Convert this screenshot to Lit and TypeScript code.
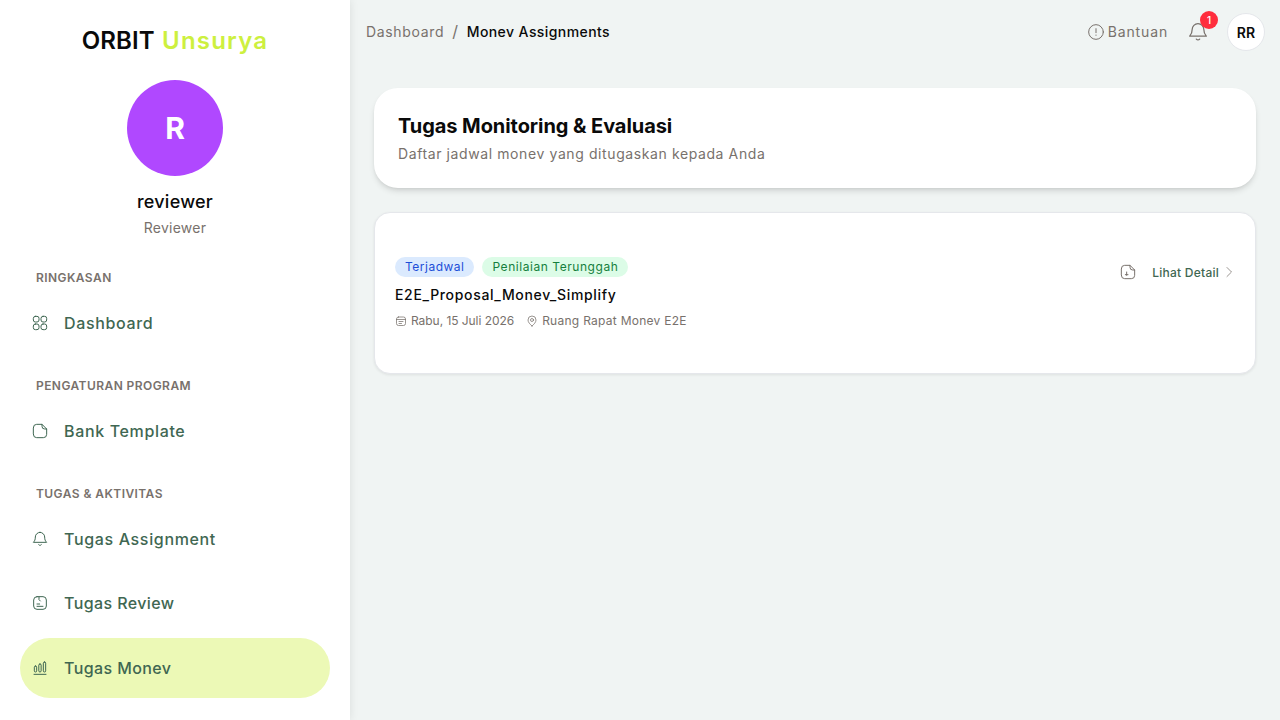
import {LitElement, css, html, svg} from 'lit';
import {customElement} from 'lit/decorators.js';

const icon = (size: number, body: unknown, sw = 1.5) => html`
  <svg width=${size} height=${size} viewBox="0 0 24 24" fill="none" stroke="currentColor"
    stroke-width=${sw} stroke-linecap="round" stroke-linejoin="round">${body}</svg>`;

const grid = svg`<rect x="2" y="2" width="8.500" height="8.500" rx="3"/><rect x="13.500" y="2" width="8.500" height="8.500" rx="3"/><rect x="2" y="13.500" width="8.500" height="8.500" rx="3"/><rect x="13.500" y="13.500" width="8.500" height="8.500" rx="3"/>`;
const note = svg`<path d="M2 7a5 5 0 0 1 5-5h8l7 7v8a5 5 0 0 1-5 5H7a5 5 0 0 1-5-5Z"/><path d="M15 2v3a4 4 0 0 0 4 4h3"/>`;
const bell = svg`<path d="M12 2a7 7 0 0 0-7 7c0 4-1 6-3 8h20c-2-2-3-4-3-8a7 7 0 0 0-7-7Z"/><path d="M10 20.500c.6.700 1.200 1 2 1s1.400-.3 2-1"/>`;
const review = svg`<rect x="2.500" y="2.500" width="19" height="19" rx="5"/><path d="M10.500 3v4l2 2M7.500 17h9M7.500 13.500h4"/>`;
const bars = svg`<rect x="3.500" y="9" width="3.500" height="9" rx="1.700"/><rect x="10.200" y="6" width="3.500" height="12" rx="1.700"/><rect x="17" y="3" width="3.500" height="15" rx="1.700"/><path d="M3 21.500h18"/>`;
const alert = svg`<circle cx="12" cy="12" r="11"/><path d="M12 7v6M12 16.500v.5"/>`;
const calendar = svg`<rect x="3" y="4" width="18" height="17" rx="4"/><path d="M3 9h18M8 13h8M8 17h5"/>`;
const pin = svg`<path d="M12 22c-4-3.500-8-7.500-8-12a8 8 0 0 1 16 0c0 4.500-4 8.500-8 12Z"/><circle cx="12" cy="10" r="3"/>`;
const doc = svg`<path d="M2 7a5 5 0 0 1 5-5h8l7 7v8a5 5 0 0 1-5 5H7a5 5 0 0 1-5-5Z"/><path d="M15 2v3a4 4 0 0 0 4 4h3"/><path d="M10 12v5M8 16h4"/>`;
const chevron = svg`<path d="M8 3l9 9-9 9"/>`;

@customElement('app-root')
export class AppRoot extends LitElement {

  static get styles() {
    return [
      css`
        :host {
          background: #f0f4f3;
          color: #0a0a0a;
          display: flex;
          font-family: Inter, 'Noto Sans', sans-serif;
          height: 720px;
          overflow: hidden;
          width: 1280px;
        }
        .side {
          background: #fff;
          box-shadow: 1px 0 8px rgba(0, 0, 0, .08);
          box-sizing: border-box;
          flex: 0 0 350px;
          padding: 25px 20px 0;
          position: relative;
        }
        .brand {
          font-size: 24px;
          font-weight: 600;
          letter-spacing: .15px;
          line-height: 32px;
          text-align: center;
          word-spacing: 1px;
        }
        .brand span {
          color: #cdf03f;
          letter-spacing: 1.2px;
        }
        .profile {
          align-items: center;
          display: flex;
          flex-direction: column;
          margin-top: 23px;
        }
        .avatar {
          align-items: center;
          background: #b048ff;
          border-radius: 50%;
          color: #fff;
          display: flex;
          font-size: 30px;
          font-weight: 700;
          height: 96px;
          justify-content: center;
          width: 96px;
        }
        .name {
          font-size: 18px;
          font-weight: 500;
          letter-spacing: .25px;
          line-height: 28px;
          margin-top: 12px;
        }
        .role {
          color: #78716c;
          font-size: 14px;
          letter-spacing: .25px;
          line-height: 20px;
          margin-top: 2px;
        }
        .label {
          color: #78716c;
          font-size: 12px;
          font-weight: 600;
          height: 16px;
          letter-spacing: .43px;
          line-height: 16px;
          padding-left: 16px;
        }
        .label.first { margin-top: 32px; }
        .label:not(.first) { margin-top: 25px; }
        .item {
          align-items: center;
          border-radius: 30px;
          color: #3f6752;
          display: flex;
          font-size: 16px;
          font-weight: 500;
          gap: 16px;
          height: 60px;
          letter-spacing: .65px;
          margin-top: 4px;
          padding-left: 12px;
        }
        .item.tight { letter-spacing: .4px; }
        .label + .item { margin-top: 7px; }
        .item.active {
          background: #ecf9b6;
          margin-top: 5px;
        }
        .main {
          display: flex;
          flex: 1;
          flex-direction: column;
          min-width: 0;
        }
        .top {
          align-items: center;
          display: flex;
          height: 64px;
          justify-content: space-between;
          padding: 0 15px 0 16px;
        }
        .crumbs {
          align-items: center;
          color: #78716c;
          display: flex;
          font-size: 14px;
          gap: 8px;
          letter-spacing: .67px;
          padding-bottom: 2px;
        }
        .crumbs i {
          font-size: 16px;
          font-style: normal;
        }
        .crumbs b {
          color: #0a0a0a;
          font-weight: 500;
          letter-spacing: .42px;
        }
        .actions {
          align-items: center;
          color: #78716c;
          display: flex;
        }
        .help {
          align-items: center;
          display: flex;
          font-size: 14px;
          gap: 4px;
          letter-spacing: .85px;
        }
        .help span { padding-bottom: 2px; }
        .bell {
          display: flex;
          margin-left: 20px;
          position: relative;
        }
        .badge {
          align-items: center;
          background: #ff2d3d;
          border-radius: 50%;
          color: #fff;
          display: flex;
          font-size: 10px;
          font-weight: 500;
          height: 18px;
          justify-content: center;
          position: absolute;
          right: -10px;
          top: -11px;
          width: 18px;
        }
        .me {
          align-items: center;
          background: #fff;
          border: 1px solid #e5e7eb;
          border-radius: 50%;
          box-sizing: border-box;
          color: #0a0a0a;
          display: flex;
          font-size: 14px;
          font-weight: 600;
          height: 38px;
          justify-content: center;
          margin-left: 19px;
          width: 38px;
        }
        .content {
          display: flex;
          flex-direction: column;
          gap: 24px;
          padding: 24px 24px 0;
        }
        .head {
          background: #fff;
          border-radius: 24px;
          box-shadow: 0 4px 6px -1px rgba(0, 0, 0, .12), 0 2px 4px -2px rgba(0, 0, 0, .1);
          box-sizing: border-box;
          height: 100px;
          padding: 24px;
        }
        .head h1 {
          font-size: 20px;
          font-weight: 700;
          letter-spacing: -.07px;
          line-height: 28px;
          margin: 0;
        }
        .head p {
          color: #78716c;
          font-size: 14px;
          letter-spacing: .6px;
          line-height: 20px;
          margin: 4px 0 0;
        }
        .card {
          align-items: flex-start;
          background: #fff;
          border: 1px solid #e5e7eb;
          border-radius: 16px;
          box-shadow: 0 1px 3px rgba(0, 0, 0, .08);
          box-sizing: border-box;
          display: flex;
          height: 162px;
          justify-content: space-between;
          padding: 44px 20px 0;
        }
        .tags {
          display: flex;
          gap: 8px;
        }
        .tag {
          border-radius: 10px;
          font-size: 12px;
          letter-spacing: .5px;
          line-height: 20px;
          padding: 0 10px;
        }
        .tag.blue {
          background: #dbeafe;
          color: #1d4ed8;
        }
        .tag.green {
          background: #dcfce7;
          color: #15803d;
          letter-spacing: .55px;
        }
        .title {
          font-size: 14px;
          font-weight: 500;
          letter-spacing: .67px;
          line-height: 20px;
          margin-top: 8px;
        }
        .meta {
          align-items: center;
          color: #78716c;
          display: flex;
          font-size: 12px;
          gap: 12px;
          letter-spacing: -.05px;
          line-height: 16px;
          margin-top: 8px;
        }
        .meta span {
          align-items: center;
          display: flex;
          gap: 4px;
        }
        .meta span:last-child { letter-spacing: .27px; }
        .link {
          align-items: center;
          color: #78716c;
          display: flex;
          height: 30px;
        }
        .link b {
          color: #3f6752;
          font-size: 12px;
          font-weight: 500;
          letter-spacing: .25px;
          margin-left: 16px;
          margin-right: 4px;
        }
      `,
    ];
  }

  render() {
    return html`
      <aside class="side">
        <div class="brand">ORBIT <span>Unsurya</span></div>
        <div class="profile">
          <div class="avatar">R</div>
          <div class="name">reviewer</div>
          <div class="role">Reviewer</div>
        </div>
        <div class="label first">RINGKASAN</div>
        <div class="item">${icon(16, grid)}Dashboard</div>
        <div class="label">PENGATURAN PROGRAM</div>
        <div class="item">${icon(16, note)}Bank Template</div>
        <div class="label">TUGAS &amp; AKTIVITAS</div>
        <div class="item">${icon(16, bell)}Tugas Assignment</div>
        <div class="item tight">${icon(16, review)}Tugas Review</div>
        <div class="item tight active">${icon(16, bars)}Tugas Monev</div>
      </aside>
      <div class="main">
        <header class="top">
          <div class="crumbs"><span>Dashboard</span><i>/</i><b>Monev Assignments</b></div>
          <div class="actions">
            <div class="help">${icon(16, alert)}<span>Bantuan</span></div>
            <div class="bell">${icon(20, bell)}<span class="badge">1</span></div>
            <div class="me">RR</div>
          </div>
        </header>
        <section class="content">
          <div class="head">
            <h1>Tugas Monitoring &amp; Evaluasi</h1>
            <p>Daftar jadwal monev yang ditugaskan kepada Anda</p>
          </div>
          <div class="card">
            <div>
              <div class="tags">
                <span class="tag blue">Terjadwal</span>
                <span class="tag green">Penilaian Terunggah</span>
              </div>
              <div class="title">E2E_Proposal_Monev_Simplify</div>
              <div class="meta">
                <span>${icon(12, calendar)}Rabu, 15 Juli 2026</span>
                <span>${icon(12, pin)}Ruang Rapat Monev E2E</span>
              </div>
            </div>
            <div class="link">${icon(16, doc)}<b>Lihat Detail</b>${icon(12, chevron)}</div>
          </div>
        </section>
      </div>
    `;
  }
}
